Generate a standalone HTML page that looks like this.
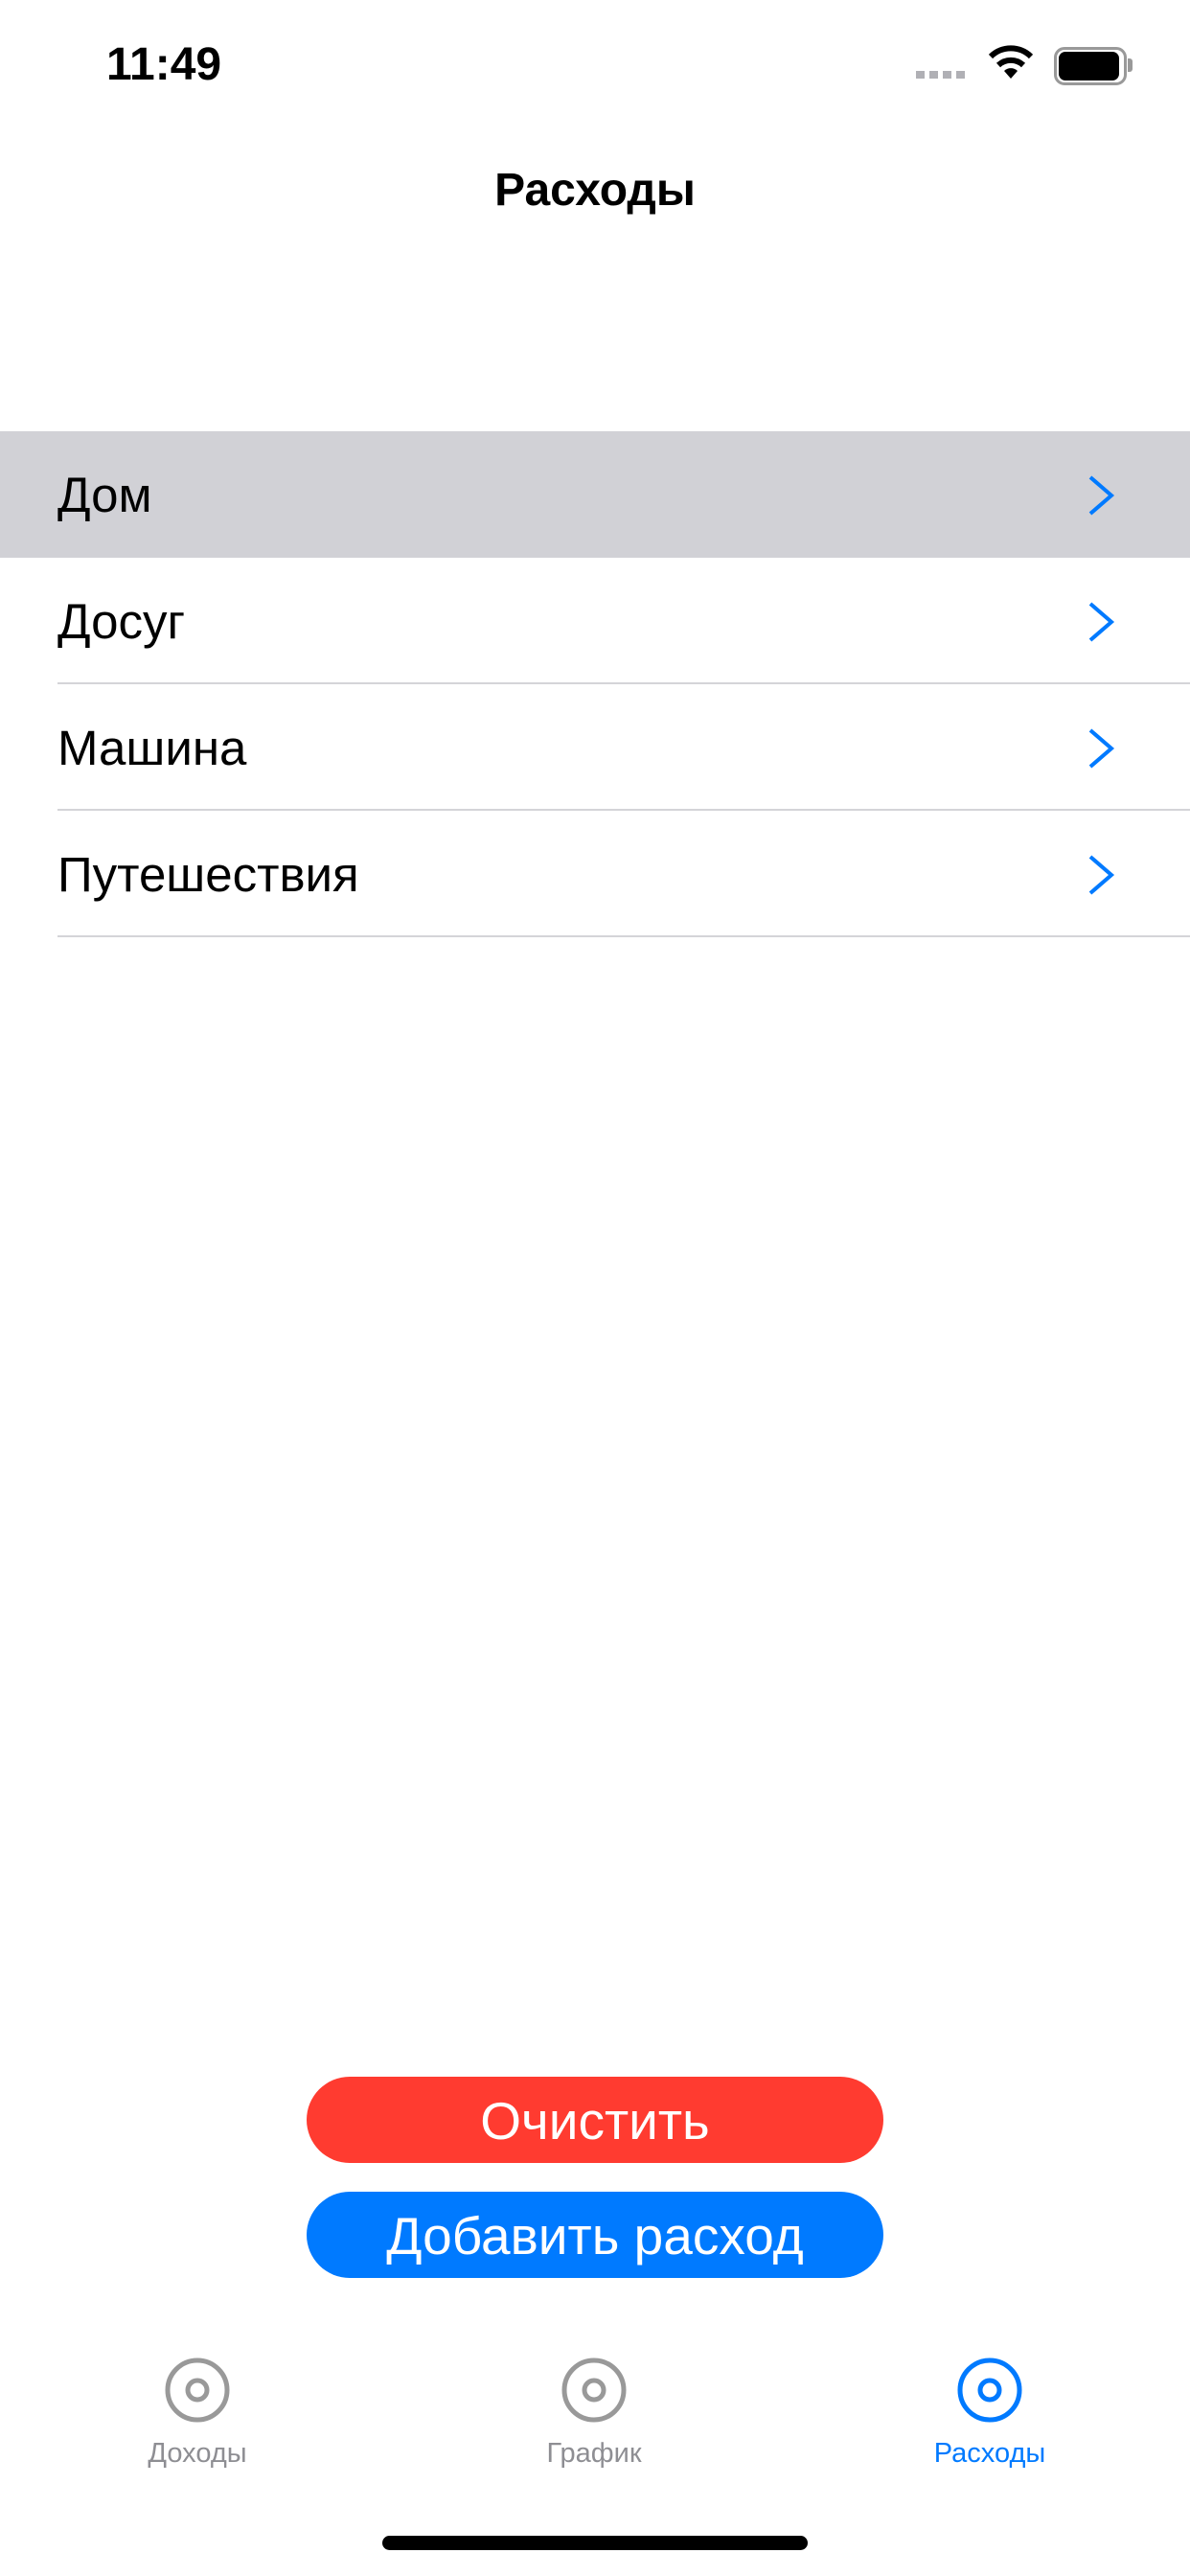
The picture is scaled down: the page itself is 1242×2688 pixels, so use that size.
<!DOCTYPE html>
<html><head><meta charset="utf-8"><style>
body{margin:0;width:1242px;height:2688px;background:#fff;position:relative;overflow:hidden;font-family:"Liberation Sans","Noto Sans CJK JP",sans-serif;color:#000}
.a{position:absolute}
.row{position:absolute;left:0;width:1242px;height:132px}
.row span{position:absolute;left:60px;top:0;line-height:134px;font-size:51px}
.sep{position:absolute;left:60px;right:0;height:2px;background:#d4d4d8}
.chev{position:absolute;left:1132px;top:44px}
.btn{position:absolute;left:320px;width:602px;height:90px;border-radius:45px;color:#fff;font-size:55px;text-align:center;line-height:92px}
.tab{position:absolute;top:2544px;width:200px;text-align:center;font-size:29px;color:#8e8e93}
</style></head><body>
<div class="a" style="left:111px;top:40px;font-size:48px;font-weight:bold">11:49</div>
<div class="a" style="left:956px;top:74px;width:52px;height:8px;background:repeating-linear-gradient(90deg,#b0b0b5 0 9px,transparent 9px 14px)"></div>
<svg class="a" style="left:1030px;top:46px" width="50" height="38" viewBox="0 0 50 38"><path d="M25 36 L18 28 A10 10 0 0 1 32 28 Z" fill="#000"/><path d="M12 22 A19 19 0 0 1 38 22" stroke="#000" stroke-width="6" fill="none"/><path d="M4 13 A30 30 0 0 1 46 13" stroke="#000" stroke-width="6" fill="none"/></svg>
<div class="a" style="left:1100px;top:49px;width:70px;height:34px;border:3px solid #999;border-radius:11px"></div>
<div class="a" style="left:1105px;top:54px;width:63px;height:30px;background:#000;border-radius:7px"></div>
<div class="a" style="left:1177px;top:61px;width:5px;height:14px;background:#999;border-radius:0 3px 3px 0"></div>
<div class="a" style="left:0;width:1242px;top:171px;text-align:center;font-size:48px;font-weight:bold">Расходы</div>

<div class="row" style="top:450px;background:#d1d1d6"><span>Дом</span><svg class="chev" width="34" height="46"><path d="M6 4 L28 23 L6 42" stroke="#007aff" stroke-width="4" fill="none"/></svg></div>
<div class="row" style="top:582px"><span>Досуг</span><svg class="chev" width="34" height="46"><path d="M6 4 L28 23 L6 42" stroke="#007aff" stroke-width="4" fill="none"/></svg></div>
<div class="sep" style="top:712px"></div>
<div class="row" style="top:714px"><span>Машина</span><svg class="chev" width="34" height="46"><path d="M6 4 L28 23 L6 42" stroke="#007aff" stroke-width="4" fill="none"/></svg></div>
<div class="sep" style="top:844px"></div>
<div class="row" style="top:846px"><span>Путешествия</span><svg class="chev" width="34" height="46"><path d="M6 4 L28 23 L6 42" stroke="#007aff" stroke-width="4" fill="none"/></svg></div>
<div class="sep" style="top:976px"></div>

<div class="btn" style="top:2167px;background:#ff3b30">Очистить</div>
<div class="btn" style="top:2287px;background:#007aff">Добавить расход</div>

<svg class="a" style="left:170px;top:2458px" width="72" height="72"><circle cx="36" cy="36" r="31" stroke="#999" stroke-width="5" fill="none"/><circle cx="36" cy="36" r="10" stroke="#999" stroke-width="5" fill="none"/></svg>
<svg class="a" style="left:584px;top:2458px" width="72" height="72"><circle cx="36" cy="36" r="31" stroke="#999" stroke-width="5" fill="none"/><circle cx="36" cy="36" r="10" stroke="#999" stroke-width="5" fill="none"/></svg>
<svg class="a" style="left:997px;top:2458px" width="72" height="72"><circle cx="36" cy="36" r="31" stroke="#007aff" stroke-width="5" fill="none"/><circle cx="36" cy="36" r="10" stroke="#007aff" stroke-width="5" fill="none"/></svg>
<div class="tab" style="left:106px">Доходы</div>
<div class="tab" style="left:520px">График</div>
<div class="tab" style="left:933px;color:#007aff">Расходы</div>
<div class="a" style="left:399px;top:2646px;width:444px;height:15px;border-radius:8px;background:#000"></div>
</body></html>
